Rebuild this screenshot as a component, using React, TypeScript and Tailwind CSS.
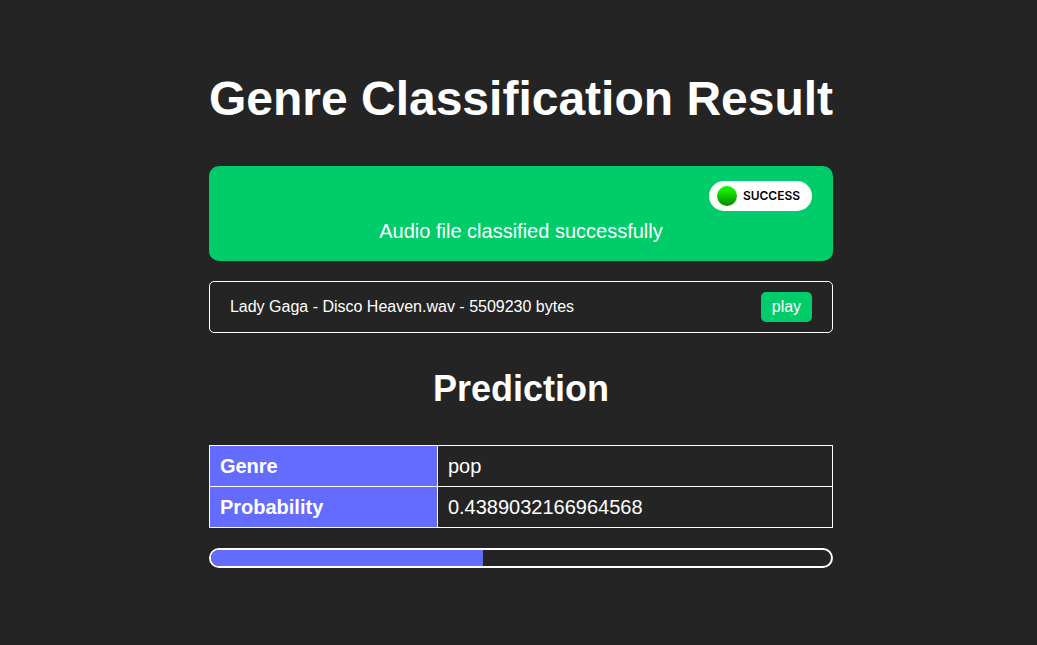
const file = { name: "Lady Gaga - Disco Heaven.wav", size: 5509230 };
const prediction = { genre: "pop", probability: 0.4389032166964568 };

function StatusBanner() {
  return (
    <section className="flex flex-col rounded-[10px] bg-[#00cc69] px-[21px] pt-[15px] pb-[15px]">
      <div className="flex h-[30px] items-center gap-1.5 self-end rounded-full bg-white pr-3 pl-2 font-['Inter',sans-serif] text-xs font-semibold text-black">
        <span className="size-5 rounded-full bg-linear-to-b from-[#14f000] from-20% to-[#0a8500]" />
        <span>SUCCESS</span>
      </div>
      <p className="mt-[5px] text-center text-xl leading-[30px]">Audio file classified successfully</p>
    </section>
  );
}

export default function App() {
  return (
    <main className="flex min-h-screen justify-center bg-[#242424] pr-4 pl-[21px] font-['Liberation_Sans',Arial,sans-serif] text-white">
      <div className="flex w-fit flex-col pt-[72px] pb-12">
        <h1 className="text-center text-5xl leading-[54px] font-bold">Genre Classification Result</h1>
        <div className="mt-10">
          <StatusBanner />
        </div>
        <section className="mt-5 flex items-center justify-between rounded-[5px] border border-white px-5 py-2.5">
          <span className="text-base leading-[30px]">
            {file.name} - {file.size} bytes
          </span>
          <button type="button" className="h-[30px] rounded-[5px] bg-[#00cc69] px-[11px] text-base">
            play
          </button>
        </section>
        <h2 className="mt-8 text-center text-4xl leading-[48px] font-bold">Prediction</h2>
        <table className="mt-8 w-full border-collapse text-left text-xl leading-5">
          <tbody>
            <tr>
              <th scope="row" className="w-[228px] border border-white bg-[#646cff] p-2.5">Genre</th>
              <td className="border border-white p-2.5">{prediction.genre}</td>
            </tr>
            <tr>
              <th scope="row" className="border border-white bg-[#646cff] p-2.5">Probability</th>
              <td className="border border-white p-2.5">{prediction.probability}</td>
            </tr>
          </tbody>
        </table>
        <div
          role="progressbar"
          aria-label="Probability"
          aria-valuemin={0}
          aria-valuemax={1}
          aria-valuenow={prediction.probability}
          className="mt-5 h-5 overflow-hidden rounded-[10px] border-2 border-white"
        >
          <div className="h-full bg-[#646cff]" style={{ width: `${prediction.probability * 100}%` }} />
        </div>
      </div>
    </main>
  );
}
